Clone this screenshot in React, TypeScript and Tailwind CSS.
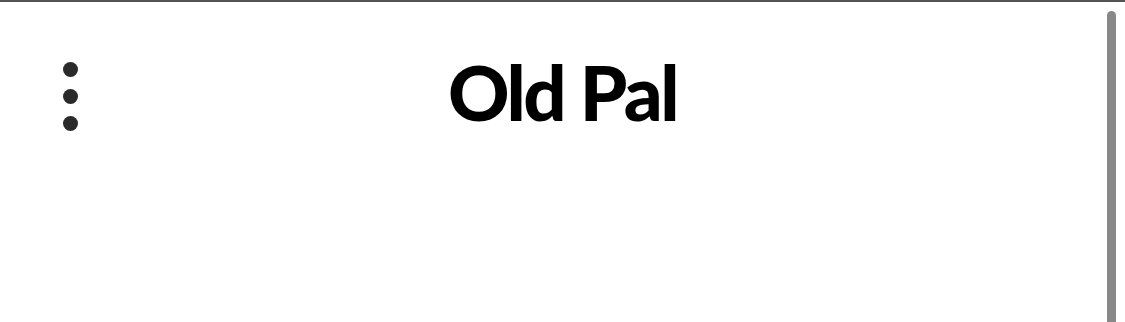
export default function App() {
  return (
    <div className="w-[1125px] h-[322px] bg-white border-t-2 border-[#555555] flex overflow-hidden">
      {/* Header */}
      <div className="flex-1 relative flex justify-center pt-[52px]">
        <div className="absolute left-[63px] top-[60px] flex flex-col gap-[12px]">
          <span className="block w-[15px] h-[15px] rounded-full bg-[#2a2a2a]" />
          <span className="block w-[15px] h-[15px] rounded-full bg-[#2a2a2a]" />
          <span className="block w-[15px] h-[15px] rounded-full bg-[#2a2a2a]" />
        </div>
        <h1
          className="text-[76px] leading-none font-black text-black tracking-[-2.5px] ml-[18px]"
          style={{ fontFamily: 'Lato, "Liberation Sans", sans-serif' }}
        >
          Old Pal
        </h1>
      </div>

      {/* Scrollbar */}
      <div className="w-[18px] pt-[9px] flex">
        <div className="w-[9px] h-full rounded-t-full bg-[#888888]" />
      </div>
    </div>
  );
}
